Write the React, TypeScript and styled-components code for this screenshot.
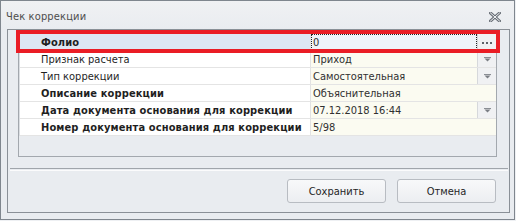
import React from 'react';
import styled, { createGlobalStyle } from 'styled-components';

const Global = createGlobalStyle`
  html, body { margin: 0; padding: 0; background: #eef0f3; }
  body { font-family: "DejaVu Sans Condensed", "DejaVu Sans", sans-serif; }
`;

const Window = styled.div`
  position: relative;
  width: 515px;
  height: 220px;
  box-sizing: border-box;
  border: 1px solid #7f868e;
  background: #e9ecf0;
  display: flex;
  flex-direction: column;
`;

const TitleBar = styled.div`
  height: 28px;
  box-sizing: border-box;
  display: flex;
  align-items: center;
  justify-content: space-between;
  padding: 3px 13px 0 5px;
  background: linear-gradient(#f0f1f3, #e9ecf0);
`;

const Title = styled.span`
  font-size: 11px;
  letter-spacing: 0.15px;
  color: #4d4d4d;
`;

const CloseBtn = styled.div`
  width: 12px;
  height: 10px;
  display: flex;
  margin-top: 1px;
`;

const Frame = styled.div`
  margin: 0 4px 0 6px;
  height: 184px;
  box-sizing: border-box;
  border: 1px solid #8a9097;
  display: flex;
  flex-direction: column;
  padding-top: 3px;
`;

const GroupBox = styled.div`
  margin: 0 12px 0 10px;
  height: 124px;
  box-sizing: border-box;
  border: 1px solid #a3a8ae;
  background: #e9ecf0;
`;

const Grid = styled.div`
  border-left: 1px solid #dcdfe3;
  display: flex;
  flex-direction: column;
`;

const Row = styled.div<{ $selected?: boolean }>`
  display: grid;
  grid-template-columns: 291px 1fr;
  height: 17px;
  box-sizing: border-box;
  border-bottom: 1px solid #e4e4e4;
  background: ${(p) => (p.$selected ? '#dde7f3' : '#ffffff')};
`;

const NameCell = styled.div<{ $bold?: boolean }>`
  display: flex;
  align-items: center;
  padding-left: 21px;
  border-right: 1px solid #e2e2e2;
  font-size: 11px;
  letter-spacing: ${(p) => (p.$bold ? '0.12px' : '0')};
  font-weight: ${(p) => (p.$bold ? 700 : 400)};
  color: #1f1f1f;
  white-space: nowrap;
  overflow: hidden;
`;

const ValueCell = styled.div<{ $selected?: boolean }>`
  display: flex;
  align-items: stretch;
  background: ${(p) => (p.$selected ? '#eff3f9' : '#fbfbf1')};
  font-size: 11px;
  color: #303030;
  min-width: 0;
`;

const ValueText = styled.div<{ $focused?: boolean }>`
  flex: 1;
  display: flex;
  align-items: center;
  padding-left: 2px;
  box-sizing: border-box;
  outline: ${(p) => (p.$focused ? '1px dotted #222' : 'none')};
  outline-offset: -1px;
  white-space: nowrap;
`;

const EditBtn = styled.div`
  width: 18px;
  flex: none;
  display: flex;
  align-items: center;
  justify-content: center;
  background: #f0f1f3;
  border-left: 1px solid #d6d8db;
`;

const Dots = styled.div`
  display: flex;
  gap: 2px;
  margin-top: 1px;
`;

const Dot = styled.span`
  width: 2px;
  height: 2px;
  background: #5e6268;
`;

const Separator = styled.div`
  margin: 11px 1px 0 2px;
  height: 1px;
  border-top: 1px solid #a0a5ab;
  border-bottom: 1px solid #fbfbfc;
`;

const ButtonBar = styled.div`
  display: flex;
  justify-content: flex-end;
  gap: 11px;
  padding: 8px 13px 0 0;
`;

const Button = styled.div`
  width: 99px;
  height: 24px;
  box-sizing: border-box;
  border: 1px solid #b8bcc2;
  border-radius: 3px;
  background: linear-gradient(#f8f9fa, #eceef1);
  display: flex;
  align-items: center;
  justify-content: center;
  font-size: 11px;
  color: #252525;
`;

const Highlight = styled.div`
  position: absolute;
  left: 15px;
  top: 29px;
  width: 484px;
  height: 23px;
  box-sizing: border-box;
  border: 4px solid #ea1d25;
  pointer-events: none;
`;

const Arrow = () => (
  <svg width="7" height="5" viewBox="0 0 7 5">
    <rect x="0" y="0" width="7" height="1" fill="#8a8e94" />
    <path d="M0.5 1.5 L6.5 1.5 L3.5 4.5 Z" fill="#7a7e84" />
  </svg>
);

type R = { name: string; value: string; bold?: boolean; btn?: 'dots' | 'arrow'; selected?: boolean };

const rows: R[] = [
  { name: 'Фолио', value: '0', bold: true, btn: 'dots', selected: true },
  { name: 'Признак расчета', value: 'Приход', btn: 'arrow' },
  { name: 'Тип коррекции', value: 'Самостоятельная', btn: 'arrow' },
  { name: 'Описание коррекции', value: 'Объяснительная', bold: true },
  { name: 'Дата документа основания для коррекции', value: '07.12.2018 16:44', bold: true, btn: 'arrow' },
  { name: 'Номер документа основания для коррекции', value: '5/98', bold: true },
];

export default function App() {
  return (
    <>
      <Global />
      <Window>
        <TitleBar>
          <Title>Чек коррекции</Title>
          <CloseBtn>
            <svg width="12" height="10" viewBox="0 0 12 10">
              <path d="M1.5 1 L10.5 9 M10.5 1 L1.5 9" stroke="#6a7078" strokeWidth="3" strokeLinecap="square" />
              <path d="M1.5 1 L10.5 9 M10.5 1 L1.5 9" stroke="#f4f5f7" strokeWidth="1" strokeLinecap="square" />
            </svg>
          </CloseBtn>
        </TitleBar>
        <Frame>
          <GroupBox>
            <Grid>
              {rows.map((r) => (
                <Row key={r.name} $selected={r.selected}>
                  <NameCell $bold={r.bold}>{r.name}</NameCell>
                  <ValueCell $selected={r.selected}>
                    <ValueText $focused={r.selected}>{r.value}</ValueText>
                    {r.btn && (
                      <EditBtn>
                        {r.btn === 'dots' ? (
                          <Dots>
                            <Dot />
                            <Dot />
                            <Dot />
                          </Dots>
                        ) : (
                          <Arrow />
                        )}
                      </EditBtn>
                    )}
                  </ValueCell>
                </Row>
              ))}
            </Grid>
          </GroupBox>
          <Separator />
          <ButtonBar>
            <Button>Сохранить</Button>
            <Button>Отмена</Button>
          </ButtonBar>
        </Frame>
        <Highlight />
      </Window>
    </>
  );
}
